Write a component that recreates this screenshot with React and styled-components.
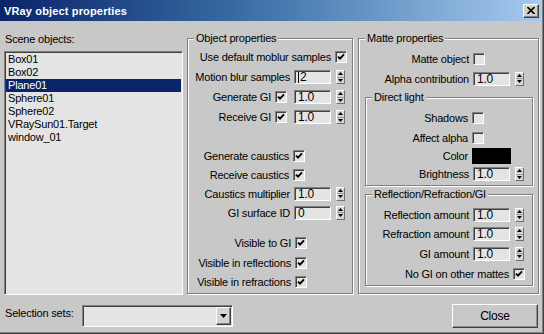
import styled, { createGlobalStyle } from "styled-components";

const GlobalStyle = createGlobalStyle`
  html, body {
    margin: 0;
    padding: 0;
    background: #c8c8c8;
  }
`;

const objects = [
  "Box01",
  "Box02",
  "Plane01",
  "Sphere01",
  "Sphere02",
  "VRaySun01.Target",
  "window_01",
];

function Check({ on }) {
  return (
    <CheckBox>
      {on && (
        <svg width="8" height="8" viewBox="0 0 8 8">
          <path d="M1 3.6 L3 5.6 L7 1.4" fill="none" stroke="#000" strokeWidth="1.9" />
        </svg>
      )}
    </CheckBox>
  );
}

function Spinner() {
  return (
    <SpinBox>
      <SpinHalf>
        <svg width="5" height="3" viewBox="0 0 5 3">
          <path d="M2.5 0 L5 3 L0 3 Z" fill="#000" />
        </svg>
      </SpinHalf>
      <SpinHalf>
        <svg width="5" height="3" viewBox="0 0 5 3">
          <path d="M0 0 L5 0 L2.5 3 Z" fill="#000" />
        </svg>
      </SpinHalf>
    </SpinBox>
  );
}

function Num({ value, caret, ml }) {
  return (
    <>
      <Field $ml={ml}>
        {caret && <Caret />}
        {value}
      </Field>
      <Spinner />
    </>
  );
}

export default function App() {
  return (
    <>
      <GlobalStyle />
      <Window>
        <TitleBar>
          <Title>VRay object properties</Title>
          <CloseBox>
            <svg width="8" height="7" viewBox="0 0 8 7">
              <path d="M0.5 0 L7.5 7 M7.5 0 L0.5 7" stroke="#000" strokeWidth="1.6" />
            </svg>
          </CloseBox>
        </TitleBar>

        <Main>
          <LeftCol>
            <SectionLabel>Scene objects:</SectionLabel>
            <ListBox>
              {objects.map((name) => (
                <ListItem key={name} $selected={name === "Plane01"}>
                  {name}
                </ListItem>
              ))}
            </ListBox>
          </LeftCol>

          <GroupBox $w={166} $ml={4} $pt={8}>
            <Legend>Object properties</Legend>
            <Row $pr={5}>
              <Label>Use default moblur samples</Label>
              <Check on />
            </Row>
            <Row $pr={7}>
              <Label>Motion blur samples</Label>
              <Num value="2" caret />
            </Row>
            <Row $pr={7}>
              <Label>Generate GI</Label>
              <Check on />
              <Num value="1.0" ml={7} />
            </Row>
            <Row $pr={7}>
              <Label>Receive GI</Label>
              <Check on />
              <Num value="1.0" ml={7} />
            </Row>
            <Row $pr={47} $mt={19} $h={19}>
              <Label>Generate caustics</Label>
              <Check on />
            </Row>
            <Row $pr={47} $h={19}>
              <Label>Receive caustics</Label>
              <Check on />
            </Row>
            <Row $pr={7} $h={19}>
              <Label>Caustics multiplier</Label>
              <Num value="1.0" />
            </Row>
            <Row $pr={7} $h={19}>
              <Label>GI surface ID</Label>
              <Num value="0" />
            </Row>
            <Row $pr={45} $mt={11}>
              <Label>Visible to GI</Label>
              <Check on />
            </Row>
            <Row $pr={45}>
              <Label>Visible in reflections</Label>
              <Check on />
            </Row>
            <Row $pr={45} $h={18}>
              <Label>Visible in refractions</Label>
              <Check on />
            </Row>
          </GroupBox>

          <GroupBox $w={181} $ml={5} $pt={10}>
            <Legend>Matte properties</Legend>
            <Row $pr={53}>
              <Label>Matte object</Label>
              <Check />
            </Row>
            <Row $pr={14} $h={19}>
              <Label>Alpha contribution</Label>
              <Num value="1.0" />
            </Row>

            <SubGroup $mt={9} $pb={2}>
              <Legend>Direct light</Legend>
              <Row $pr={48}>
                <Label>Shadows</Label>
                <Check />
              </Row>
              <Row $pr={48} $h={19}>
                <Label>Affect alpha</Label>
                <Check />
              </Row>
              <Row $pr={21} $h={18}>
                <Label>Color</Label>
                <Swatch />
              </Row>
              <Row $pr={8} $h={18}>
                <Label>Brightness</Label>
                <Num value="1.0" />
              </Row>
            </SubGroup>

            <SubGroup $mt={8} $pb={1}>
              <Legend>Reflection/Refraction/GI</Legend>
              <Row $pr={8} $h={19}>
                <Label>Reflection amount</Label>
                <Num value="1.0" />
              </Row>
              <Row $pr={8}>
                <Label>Refraction amount</Label>
                <Num value="1.0" />
              </Row>
              <Row $pr={8} $h={19}>
                <Label>GI amount</Label>
                <Num value="1.0" />
              </Row>
              <Row $pr={7} $h={21}>
                <Label>No GI on other mattes</Label>
                <Check on />
              </Row>
            </SubGroup>
          </GroupBox>
        </Main>

        <Footer>
          <FooterLabel>Selection sets:</FooterLabel>
          <Combo>
            <DropButton>
              <svg width="7" height="4" viewBox="0 0 7 4">
                <path d="M0 0 L7 0 L3.5 4 Z" fill="#000" />
              </svg>
            </DropButton>
          </Combo>
          <PushButton>Close</PushButton>
        </Footer>
      </Window>
    </>
  );
}

const Window = styled.div`
  width: 544px;
  height: 334px;
  box-sizing: border-box;
  padding: 0 3px 2px 0;
  display: flex;
  flex-direction: column;
  background: #c8c8c8;
  box-shadow: inset -1px -1px 0 #404040, inset -2px -2px 0 #808080;
  font-family: "Liberation Sans", Arial, sans-serif;
  font-size: 11px;
  letter-spacing: -0.2px;
  color: #000;
  overflow: hidden;
`;

const TitleBar = styled.div`
  height: 21px;
  flex-shrink: 0;
  display: flex;
  align-items: center;
  justify-content: space-between;
  padding: 0 2px 0 4px;
  background: linear-gradient(to right, #0a246a 0%, #3a6ea5 45%, #a6caf0 100%);
`;

const Title = styled.div`
  color: #fff;
  font-weight: bold;
  font-size: 11px;
  letter-spacing: 0.15px;
`;

const CloseBox = styled.div`
  width: 16px;
  height: 14px;
  box-sizing: border-box;
  display: flex;
  align-items: center;
  justify-content: center;
  background: #d4d0c8;
  border-top: 1px solid #fff;
  border-left: 1px solid #fff;
  border-right: 1px solid #404040;
  border-bottom: 1px solid #404040;
  box-shadow: inset -1px -1px 0 #808080;
`;

const Main = styled.div`
  display: flex;
  height: 263px;
  margin-top: 11px;
  padding-left: 4px;
`;

const LeftCol = styled.div`
  width: 179px;
  display: flex;
  flex-direction: column;
`;

const SectionLabel = styled.div`
  height: 14px;
  line-height: 14px;
  padding-left: 1px;
`;

const ListBox = styled.div`
  flex: 1;
  margin-top: 5px;
  box-sizing: border-box;
  background: #e4e4e4;
  border-top: 1px solid #808080;
  border-left: 1px solid #808080;
  border-right: 1px solid #fff;
  border-bottom: 1px solid #fff;
  box-shadow: inset 1px 1px 0 #404040;
  padding: 1px 1px 0 1px;
`;

const ListItem = styled.div`
  height: 13px;
  line-height: 13px;
  padding-left: 2px;
  white-space: nowrap;
  background: ${(p) => (p.$selected ? "#0a246a" : "transparent")};
  color: ${(p) => (p.$selected ? "#fff" : "#000")};
`;

const GroupBox = styled.div`
  position: relative;
  width: ${(p) => p.$w}px;
  margin: 6px 0 1px ${(p) => p.$ml}px;
  padding-top: ${(p) => p.$pt}px;
  box-sizing: border-box;
  display: flex;
  flex-direction: column;
  border: 1px solid #808080;
  box-shadow: inset 1px 1px 0 #fff, 1px 1px 0 #fff;
`;

const SubGroup = styled.div`
  position: relative;
  margin: ${(p) => p.$mt}px 5px 0 6px;
  padding-top: 10px;
  padding-bottom: ${(p) => p.$pb}px;
  display: flex;
  flex-direction: column;
  border: 1px solid #808080;
  box-shadow: inset 1px 1px 0 #fff, 1px 1px 0 #fff;
`;

const Legend = styled.div`
  position: absolute;
  top: -7px;
  left: 6px;
  height: 13px;
  line-height: 13px;
  padding: 0 2px;
  background: #c8c8c8;
  white-space: nowrap;
`;

const Row = styled.div`
  display: flex;
  align-items: center;
  justify-content: flex-end;
  height: ${(p) => p.$h || 20}px;
  margin-top: ${(p) => p.$mt || 0}px;
  padding-right: ${(p) => p.$pr || 0}px;
  flex-shrink: 0;
`;

const Label = styled.span`
  white-space: nowrap;
  margin-right: 4px;
`;

const CheckBox = styled.div`
  width: 12px;
  height: 12px;
  box-sizing: border-box;
  display: flex;
  align-items: center;
  justify-content: center;
  background: #e4e4e4;
  border-top: 1px solid #808080;
  border-left: 1px solid #808080;
  border-right: 1px solid #fff;
  border-bottom: 1px solid #fff;
  box-shadow: inset 1px 1px 0 #404040;
`;

const Field = styled.div`
  width: 37px;
  height: 14px;
  box-sizing: border-box;
  margin-left: ${(p) => p.$ml || 0}px;
  padding-left: 3px;
  display: flex;
  align-items: center;
  background: #e4e4e4;
  border-top: 1px solid #808080;
  border-left: 1px solid #808080;
  border-right: 1px solid #fff;
  border-bottom: 1px solid #fff;
  box-shadow: inset 1px 1px 0 #404040;
  font-size: 12px;
  line-height: 12px;
`;

const Caret = styled.span`
  display: inline-block;
  width: 1px;
  height: 11px;
  margin-right: 1px;
  background: #000;
`;

const SpinBox = styled.div`
  width: 9px;
  height: 14px;
  box-sizing: border-box;
  margin-left: 5px;
  display: flex;
  flex-direction: column;
  background: #d6d6d6;
  border-top: 1px solid #fff;
  border-left: 1px solid #fff;
  border-right: 1px solid #707070;
  border-bottom: 1px solid #707070;
`;

const SpinHalf = styled.div`
  flex: 1;
  display: flex;
  align-items: center;
  justify-content: center;
  & + & {
    border-top: 1px solid #9a9a9a;
  }
`;

const Swatch = styled.div`
  width: 39px;
  height: 16px;
  background: #000;
`;

const Footer = styled.div`
  display: flex;
  align-items: flex-start;
  height: 24px;
  margin-top: 9px;
  padding-left: 4px;
`;

const FooterLabel = styled.div`
  width: 78px;
  height: 14px;
  line-height: 14px;
  margin-top: 2px;
  padding-left: 1px;
  box-sizing: border-box;
`;

const Combo = styled.div`
  width: 151px;
  height: 22px;
  margin-top: 1px;
  box-sizing: border-box;
  display: flex;
  justify-content: flex-end;
  align-items: stretch;
  padding: 1px;
  background: #e4e4e4;
  border-top: 1px solid #808080;
  border-left: 1px solid #808080;
  border-right: 1px solid #fff;
  border-bottom: 1px solid #fff;
  box-shadow: inset 1px 1px 0 #404040;
`;

const DropButton = styled.div`
  width: 15px;
  box-sizing: border-box;
  display: flex;
  align-items: center;
  justify-content: center;
  background: #d4d4d4;
  border-top: 1px solid #fff;
  border-left: 1px solid #fff;
  border-right: 1px solid #404040;
  border-bottom: 1px solid #404040;
  box-shadow: inset -1px -1px 0 #808080;
`;

const PushButton = styled.div`
  width: 86px;
  height: 24px;
  margin-left: auto;
  margin-right: 3px;
  box-sizing: border-box;
  display: flex;
  align-items: center;
  justify-content: center;
  background: #c8c8c8;
  border-top: 1px solid #fff;
  border-left: 1px solid #fff;
  border-right: 1px solid #404040;
  border-bottom: 1px solid #404040;
  box-shadow: inset -1px -1px 0 #909090;
  font-size: 12px;
`;
